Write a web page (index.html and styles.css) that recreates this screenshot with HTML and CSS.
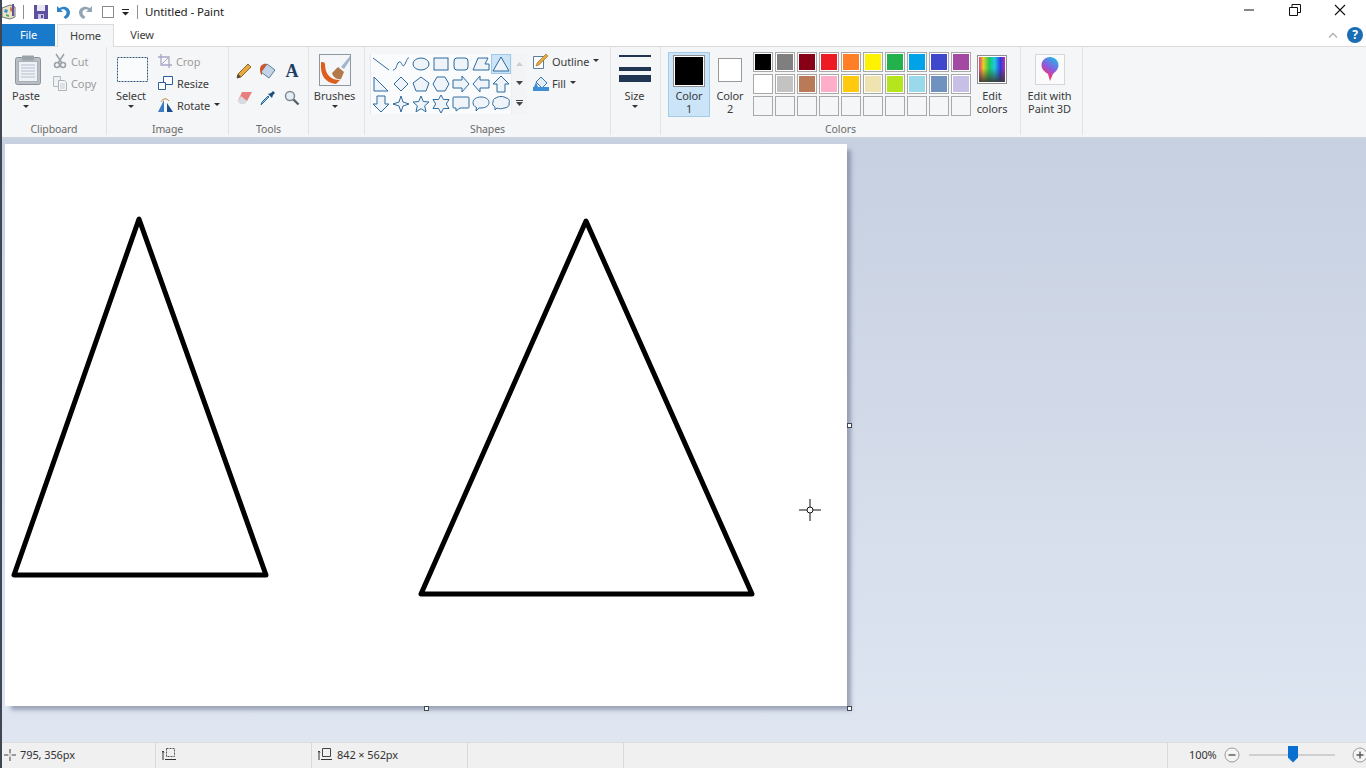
FILE: index.html
```html
<!DOCTYPE html>
<html lang="en">
<head>
<meta charset="utf-8">
<title>Untitled - Paint</title>
<link rel="stylesheet" href="styles.css">
</head>
<body>
<div class="app">
  <header class="titlebar">
    <svg class="qa app-icon" width="14" height="18" viewBox="0 0 14 18"><path d="M0 5 8 2l5 2v10l-5 2-8-2z" fill="#e9e4c8" stroke="#6a7a7c"/><path d="M3 6l3 1-1 3-3-1z" fill="#3d8fc9"/><path d="M8 4l3 1v4l-3-1z" fill="#d8803a"/><path d="M4 11l3 1v2l-3-1z" fill="#5aa35a"/><path d="M11 1v12" stroke="#6a4f9a" stroke-width="2"/></svg>
    <span class="qa-sep first"></span>
    <svg class="qa save" width="16" height="16" viewBox="0 0 16 16"><path d="M1 1h14v14H1z" fill="#5d519f"/><path d="M4 1h8v6H4z" fill="#e9e6f4"/><path d="M5 10h6v5H5z" fill="#c9c4e2"/><path d="M8 11h2v3H8z" fill="#5d519f"/></svg>
    <svg class="qa undo" width="16" height="16" viewBox="0 0 16 16"><path d="M2 2v6h6L5.700 5.800C8 4.300 11.500 5.500 11.500 8.500c0 2-1 3.300-3 4.500l2 2c3-1.500 4.500-3.500 4.500-6.500C15 3.500 9 .8 4.300 4.300z" fill="#2f83c9"/></svg>
    <svg class="qa redo" width="16" height="16" viewBox="0 0 16 16"><path d="M14 2v6H8l2.300-2.200C8 4.300 4.500 5.500 4.500 8.500c0 2 1 3.300 3 4.500l-2 2C2.500 13.500 1 11.500 1 8.500 1 3.500 7 .8 11.700 4.300z" fill="#93a5b5"/></svg>
    <span class="qa-box"></span>
    <svg class="qa qa-more" width="9" height="7" viewBox="0 0 9 7"><path d="M1 .5h7" stroke="#222"/><path d="M1 3h7L4.500 6.500z" fill="#222"/></svg>
    <span class="qa-sep"></span>
    <span class="window-title">Untitled - Paint</span>
    <div class="window-controls">
      <svg width="12" height="12" viewBox="0 0 12 12"><path d="M1 6h10" stroke="#111"/></svg>
      <svg width="12" height="12" viewBox="0 0 12 12"><path d="M.5 3.500h8v8h-8zM3 3.500v-3h8.500v8h-3" fill="none" stroke="#111"/></svg>
      <svg width="12" height="12" viewBox="0 0 12 12"><path d="M1 1l10 10M11 1 1 11" stroke="#111" stroke-width="1.100"/></svg>
    </div>
  </header>

  <nav class="tabs">
    <span class="tab file">File</span>
    <span class="tab home">Home</span>
    <span class="tab view">View</span>
    <div class="tab-right">
      <svg width="10" height="6" viewBox="0 0 10 6"><path d="M1 5.500l4-4 4 4" fill="none" stroke="#aab0b6" stroke-width="1.300"/></svg>
      <svg width="16" height="16" viewBox="0 0 16 16"><circle cx="8" cy="8" r="8" fill="#1a6db5"/><text x="8" y="12" class="help-mark">?</text></svg>
    </div>
  </nav>

  <section class="ribbon">
    <div class="group g-clipboard">
      <div class="group-body">
        <div class="big w48">
          <div class="big-icon paste-icon">
            <svg width="26" height="30" viewBox="0 0 26 30"><rect x=".5" y="2.500" width="25" height="27" rx="2" fill="#b9bec4" stroke="#8d949b"/><rect x="3.500" y="6.500" width="19" height="20" fill="#eef1f5" stroke="#aab0b8"/><rect x="7" y=".5" width="12" height="5" rx="1" fill="#9aa2aa"/><path d="M6 10h14M6 13h14M6 16h14M6 19h14M6 22h14" stroke="#b6bfd0"/></svg>
          </div>
          <span class="big-label">Paste</span>
          <span class="caret"></span>
        </div>
        <div class="small-col off">
          <div class="small"><svg class="si" width="14" height="16" viewBox="0 0 14 16"><path d="M3 1l6 9M11 1 5 10" stroke="#9aa1a8" stroke-width="1.500"/><circle cx="4" cy="12" r="2.500" fill="none" stroke="#9aa1a8" stroke-width="1.500"/><circle cx="10" cy="12" r="2.500" fill="none" stroke="#9aa1a8" stroke-width="1.500"/></svg>Cut</div>
          <div class="small"><svg class="si" width="14" height="16" viewBox="0 0 14 16"><path d="M.5 1.500h7v10h-7z" fill="#eef1f4" stroke="#b3bac1"/><path d="M5.500 5.500h6l2 2v8h-8z" fill="#f5f6f8" stroke="#a9b1b9"/><path d="M7 9h5M7 11h5M7 13h5" stroke="#c5ccd3"/></svg>Copy</div>
        </div>
      </div>
      <div class="group-label">Clipboard</div>
    </div>

    <div class="group g-image">
      <div class="group-body">
        <div class="big w48">
          <div class="big-icon select-icon">
            <svg width="31" height="25" viewBox="0 0 31 25"><rect x=".5" y=".5" width="30" height="24" fill="#fafbfc" stroke="#33567e" stroke-dasharray="2 1"/></svg>
          </div>
          <span class="big-label">Select</span>
          <span class="caret"></span>
        </div>
        <div class="small-col">
          <div class="small off"><svg class="si" width="14" height="14" viewBox="0 0 14 14"><path d="M3 0v11h11M0 3h11v11" fill="none" stroke="#a6a6c8" stroke-width="1.300"/><path d="M4 10l6-6" stroke="#a6a6c8"/></svg>Crop</div>
          <div class="small"><svg class="si" width="15" height="14" viewBox="0 0 15 14"><path d="M5.500 .5h9v8h-9z" fill="#fff" stroke="#2c5d9c"/><path d="M.5 6.500h7v7h-7z" fill="#fff" stroke="#2c5d9c"/></svg>Resize</div>
          <div class="small"><svg class="si" width="15" height="14" viewBox="0 0 15 14"><path d="M0 14 6 2v12z" fill="#3b7cc0"/><path d="M9 14V5l6 9z" fill="#1c4f8f"/><path d="M3 4c2-4 6-4 8-1" fill="none" stroke="#c9823a"/></svg>Rotate<span class="caret inline"></span></div>
        </div>
      </div>
      <div class="group-label">Image</div>
    </div>

    <div class="group g-tools">
      <div class="tool-grid">
        <svg width="16" height="16" viewBox="0 0 16 16"><path d="M1 15l1-4L12 1l3 3L5 14z" fill="#e5a93f" stroke="#8f6a2a"/><path d="M1 15l1-4 3 3z" fill="#444"/></svg>
        <svg width="18" height="17" viewBox="0 0 18 17"><path d="M8 2l8 6-6 8-8-6z" fill="#c3d4e6" stroke="#5c7da0"/><path d="M1 7c0-3 3-6 7-5L3 9v4c-1 0-2-3-2-6z" fill="#d0562c"/></svg>
        <span class="tool-a">A</span>
        <svg width="17" height="14" viewBox="0 0 17 14"><path d="M6 1h10l-5 9H2z" fill="#e77f7f"/><path d="M2 10l3-5 6 5-2 3H4z" fill="#d7dbe0"/></svg>
        <svg width="16" height="16" viewBox="0 0 16 16"><path d="M9 7 3 13l-2 2 1-3 6-6z" fill="#7fc0ea" stroke="#2b6f9f"/><path d="M8 4l4 4 1-3 2-2-2-2-2 2z" fill="#1e4f80"/></svg>
        <svg width="16" height="16" viewBox="0 0 16 16"><circle cx="6" cy="6" r="4.500" fill="#e4edf5" stroke="#7f8a95" stroke-width="1.500"/><path d="M9.500 9.500l5 5" stroke="#57606a" stroke-width="2.400"/></svg>
      </div>
      <div class="group-label">Tools</div>
    </div>

    <div class="group g-brushes">
      <div class="group-body">
        <div class="big grow">
          <div class="big-icon brush-box">
            <svg width="32" height="32" viewBox="0 0 32 32"><rect x=".5" y=".5" width="31" height="31" fill="#f4f6f9" stroke="#8f97a0"/><path d="M2 9C1 21 6 29 17 30l4-4C11 26 6 20 6 10c0-2-4-3-4-1z" fill="#dc5f1e"/><path d="M13 19l6-6 6 5-3 7c-4 1-8-2-9-6z" fill="#b27a4a"/><path d="M22 13 31 2v4l-6 9z" fill="#9fb6cc"/></svg>
          </div>
          <span class="big-label">Brushes</span>
          <span class="caret"></span>
        </div>
      </div>
      <div class="group-label blank">&nbsp;</div>
    </div>

    <div class="group g-shapes">
      <div class="group-body">
        <div class="gallery">
          <div class="shape-grid">
            <svg viewBox="0 0 20 20"><path d="M2 4l16 12"/></svg>
            <svg viewBox="0 0 20 20"><path class="nofill" d="M2 16c4 0 3-6 6-8s3 8 6 2 2-6 4-6"/></svg>
            <svg viewBox="0 0 20 20"><ellipse cx="10" cy="10" rx="8" ry="6"/></svg>
            <svg viewBox="0 0 20 20"><rect x="3" y="4" width="14" height="12"/></svg>
            <svg viewBox="0 0 20 20"><rect x="3" y="4" width="14" height="12" rx="3"/></svg>
            <svg viewBox="0 0 20 20"><path d="M2 16 7 4h10l-3 6h4v6z"/></svg>
            <svg class="picked" viewBox="0 0 20 20"><path d="M10 3l8 14H2z"/></svg>
            <svg viewBox="0 0 20 20"><path d="M3 3v14h14z"/></svg>
            <svg viewBox="0 0 20 20"><path d="M10 3l7 7-7 7-7-7z"/></svg>
            <svg viewBox="0 0 20 20"><path d="M10 3l8 6-3 8H5L2 9z"/></svg>
            <svg viewBox="0 0 20 20"><path d="M6 3h8l4 7-4 7H6l-4-7z"/></svg>
            <svg viewBox="0 0 20 20"><path d="M2 6h9V2l7 8-7 8v-4H2z"/></svg>
            <svg viewBox="0 0 20 20"><path d="M18 6H9V2l-7 8 7 8v-4h9z"/></svg>
            <svg viewBox="0 0 20 20"><path d="M10 2l8 8h-4v8H6v-8H2z"/></svg>
            <svg viewBox="0 0 20 20"><path d="M6 2h8v8h4l-8 8-8-8h4z"/></svg>
            <svg viewBox="0 0 20 20"><path d="M10 2l2 6 6 2-6 2-2 6-2-6-6-2 6-2z"/></svg>
            <svg viewBox="0 0 20 20"><path d="M10 2l2.300 5.500 5.700.500-4.300 3.800 1.300 6L10 14.700 5 17.800l1.300-6L2 8l5.700-.500z"/></svg>
            <svg viewBox="0 0 20 20"><path d="M10 1l2.500 4.500H18l-2.700 4.500 2.700 4.500h-5.500L10 19l-2.500-4.500H2L4.700 10 2 5.500h5.500z"/></svg>
            <svg viewBox="0 0 20 20"><path d="M3 3h14a1 1 0 0 1 1 1v9a1 1 0 0 1-1 1H9l-4 3v-3H3a1 1 0 0 1-1-1V4a1 1 0 0 1 1-1z"/></svg>
            <svg viewBox="0 0 20 20"><path d="M10 3c5 0 8 2.500 8 5.500S15 14 10 14H8l-3 3 .5-3.500C3 12.500 2 10.500 2 8.500 2 5.500 5 3 10 3z"/></svg>
            <svg viewBox="0 0 20 20"><path d="M5 4c2-2 8-2 10 0 3 0 4 3 3 5 1 3-2 5-5 5-2 1-5 1-7 0l-2 2v-3c-2-1-3-3-2-5 0-2 1-4 3-4z"/></svg>
          </div>
          <div class="gallery-scroll">
            <svg width="7" height="4" viewBox="0 0 7 4"><path d="M3.500 0 7 4H0z" fill="#c9ced3"/></svg>
            <svg width="7" height="4" viewBox="0 0 7 4"><path d="M3.500 4 7 0H0z" fill="#444"/></svg>
            <svg width="7" height="6" viewBox="0 0 7 6"><path d="M0 .5h7" stroke="#444"/><path d="M3.500 6 7 2H0z" fill="#444"/></svg>
          </div>
        </div>
        <div class="small-col outline-col">
          <div class="small"><svg class="si" width="16" height="16" viewBox="0 0 16 16"><path d="M.5 3.500h10v12H.5z" fill="#fff" stroke="#5f7d9c"/><path d="M3 13l1-3 9-9 2 2-9 9z" fill="#e5a93f" stroke="#8f6a2a" stroke-width=".6"/></svg>Outline<span class="caret inline"></span></div>
          <div class="small"><svg class="si" width="16" height="16" viewBox="0 0 16 16"><path d="M8 2l6 6-5 5-6-6z" fill="#e4edf5" stroke="#3d73a8"/><path d="M0 12h16v4H0z" fill="#3f8fd6"/><path d="M3 7 1 12h4z" fill="#3f8fd6"/></svg>Fill<span class="caret inline"></span></div>
        </div>
      </div>
      <div class="group-label">Shapes</div>
    </div>

    <div class="group g-size">
      <div class="group-body">
        <div class="big grow">
          <div class="big-icon size-lines"><span class="l1"></span><span class="l2"></span><span class="l3"></span></div>
          <span class="big-label">Size</span>
          <span class="caret"></span>
        </div>
      </div>
      <div class="group-label blank">&nbsp;</div>
    </div>

    <div class="group g-colors">
      <div class="group-body">
        <div class="color-btn active">
          <span class="swatch-big black"></span>
          <span class="big-label">Color<br>1</span>
        </div>
        <div class="color-btn second">
          <span class="swatch-mid"></span>
          <span class="big-label">Color<br>2</span>
        </div>
        <div class="palette">
          <span class="chip c1"></span><span class="chip c2"></span><span class="chip c3"></span><span class="chip c4"></span><span class="chip c5"></span><span class="chip c6"></span><span class="chip c7"></span><span class="chip c8"></span><span class="chip c9"></span><span class="chip c10"></span>
          <span class="chip c11"></span><span class="chip c12"></span><span class="chip c13"></span><span class="chip c14"></span><span class="chip c15"></span><span class="chip c16"></span><span class="chip c17"></span><span class="chip c18"></span><span class="chip c19"></span><span class="chip c20"></span>
          <span class="chip empty"></span><span class="chip empty"></span><span class="chip empty"></span><span class="chip empty"></span><span class="chip empty"></span><span class="chip empty"></span><span class="chip empty"></span><span class="chip empty"></span><span class="chip empty"></span><span class="chip empty"></span>
        </div>
        <div class="big edit-colors">
          <div class="big-icon"><span class="rainbow"></span></div>
          <span class="big-label">Edit<br>colors</span>
        </div>
      </div>
      <div class="group-label">Colors</div>
    </div>

    <div class="group g-3d">
      <div class="group-body">
        <div class="big grow">
          <div class="big-icon">
            <svg width="30" height="31" viewBox="0 0 30 31"><rect x=".5" y=".5" width="29" height="30" fill="#fbfbfc" stroke="#d4d6d9"/><defs><linearGradient id="p3d" x1="0.7" y1="0" x2="0.2" y2="1"><stop offset="0" stop-color="#27b4e6"/><stop offset=".45" stop-color="#8a5be0"/><stop offset=".75" stop-color="#e8397f"/><stop offset="1" stop-color="#ef5a3a"/></linearGradient></defs><path d="M15 3c5 0 8.500 3.700 8.500 8.300 0 4.200-3.300 6.700-5.500 8.700L15 27l-2-7c-3-1.700-6.500-4.300-6.500-8.700C6.500 6.700 10 3 15 3z" fill="url(#p3d)"/></svg>
          </div>
          <span class="big-label">Edit with<br>Paint 3D</span>
        </div>
      </div>
      <div class="group-label blank">&nbsp;</div>
    </div>
  </section>

  <main class="workspace">
    <div class="canvas">
      <svg class="drawing" width="842" height="562" viewBox="0 0 842 562">
        <path d="M134 75 9 431h252z" />
        <path d="M581 77 416 450h331z" />
      </svg>
      <span class="handle h-right"></span>
      <span class="handle h-bottom"></span>
      <span class="handle h-corner"></span>
      <svg class="crosshair" width="22" height="22" viewBox="0 0 22 22"><path d="M11 0v8M11 14v8M0 11h8M14 11h8" stroke="#111"/><circle cx="11" cy="11" r="3" fill="#fff" stroke="#111"/></svg>
    </div>
  </main>

  <footer class="statusbar">
    <div class="st st-pos"><svg width="12" height="12" viewBox="0 0 12 12"><path d="M6 0v12M0 6h12" stroke="#444"/><path d="M6 4v4M4 6h4" stroke="#fff"/></svg>795, 356px</div>
    <div class="st st-sel"><svg width="14" height="13" viewBox="0 0 14 13"><path d="M1 3v9M0 4.500 1 3l1 1.500M3 11.500h11" stroke="#333" fill="none"/><path d="M4.500 .5h8v8h-8z" fill="none" stroke="#555" stroke-dasharray="2 1"/></svg></div>
    <div class="st st-size"><svg width="14" height="13" viewBox="0 0 14 13"><path d="M1 3v9M0 4.500 1 3l1 1.500M3 11.500h11" stroke="#333" fill="none"/><path d="M4.500 .5h8v8h-8z" fill="none" stroke="#444"/></svg>842 × 562px</div>
    <div class="st st-blank"></div>
    <div class="st st-fill"></div>
    <div class="st-zoom">
      <span class="zoom-text">100%</span>
      <svg width="16" height="16" viewBox="0 0 16 16"><circle cx="8" cy="8" r="7" fill="#f4f4f4" stroke="#9b9b9b"/><path d="M4.500 8h7" stroke="#555" stroke-width="1.400"/></svg>
      <div class="slider"><span class="thumb"></span></div>
      <svg width="16" height="16" viewBox="0 0 16 16"><circle cx="8" cy="8" r="7" fill="#f4f4f4" stroke="#9b9b9b"/><path d="M4.500 8h7M8 4.500v7" stroke="#555" stroke-width="1.400"/></svg>
    </div>
  </footer>
</div>
</body>
</html>
```
FILE: styles.css
```css
* { box-sizing: border-box; }
html, body { margin: 0; padding: 0; }
body { font-family: "Noto Sans", "Open Sans", sans-serif; font-size: 11px; letter-spacing: -.1px; color: #3b3b3b; overflow: hidden; }
.app { width: 1366px; height: 768px; display: flex; flex-direction: column; background: #fff; border-left: 2px solid #3f4654; }

.titlebar { height: 24px; flex: none; display: flex; align-items: center; background: #fff; position: relative; }
.qa { flex: none; display: block; }
.app-icon { margin-left: 0; }
.qa-sep { width: 1px; height: 14px; background: #8f8f8f; flex: none; margin-left: 7px; }
.qa-sep.first + .save { margin-left: 9px; }
.undo { margin-left: 6px; }
.redo { margin-left: 7px; }
.qa-box { width: 12px; height: 12px; border: 1px solid #8a8a8a; background: #fff; margin-left: 8px; flex: none; }
.qa-more { margin-left: 7px; }
.window-title { margin-left: 7px; margin-bottom: 2px; font-size: 11.5px; color: #222; }
.window-controls { margin-left: auto; display: flex; align-items: center; gap: 33.500px; padding-right: 20px; margin-top: -4px; }

.tabs { height: 23px; flex: none; display: flex; align-items: stretch; background: #fff; border-bottom: 1px solid #dadbdc; }
.tab { display: flex; align-items: center; justify-content: center; padding-bottom: 2px; font-size: 11px; }
.file { width: 53px; margin-right: 1px; background: #1979ca; color: #fff; }
.home { width: 57px; margin-left: 1px; background: #f5f6f7; border: 1px solid #dadbdc; border-bottom: 0; height: 23px; color: #3b3b3b; }
.view { width: 56px; color: #3b3b3b; }
.tab-right { margin-left: auto; display: flex; align-items: center; gap: 9px; padding-right: 3px; }
.help-mark { font-size: 12px; font-weight: 700; fill: #fff; text-anchor: middle; }

.ribbon { height: 92px; flex: none; display: flex; background: #f5f6f7; border-bottom: 2px solid #c9d4e0; }
.group { display: flex; flex-direction: column; height: 88px; border-right: 1px solid #e2e3e5; padding-top: 3px; flex: none; }
.group-body { display: flex; height: 73px; flex: none; }
.group-label { text-align: center; line-height: 10px; font-size: 10.500px; color: #6a6a6a; margin-top: 1px; }
.g-clipboard { width: 105px; }
.g-image { width: 122px; }
.g-tools { width: 80px; }
.g-brushes { width: 56px; padding-right: 4px; }
.g-shapes { width: 246px; }
.g-shapes .group-body { padding-left: 5px; }
.g-size { width: 50px; padding-right: 2px; }
.g-colors { width: 360px; }
.g-colors .group-body { padding-left: 7px; }
.g-3d { width: 62px; padding-right: 4px; }

.big { display: flex; flex-direction: column; align-items: center; flex: none; }
.w48 { width: 48px; }
.grow { width: 100%; }
.big-icon { height: 39px; display: flex; align-items: center; justify-content: center; }
.paste-icon { padding: 0 0 0 3px; }
.select-icon { padding-left: 2px; }
.big-label { line-height: 13px; text-align: center; white-space: nowrap; }
.caret { display: block; width: 0; height: 0; border: 3px solid transparent; border-top: 3px solid #333; border-bottom: 0; margin-top: 3px; }
.caret.inline { display: inline-block; margin: 0 0 1px 4px; vertical-align: middle; }

.small-col { display: flex; flex-direction: column; padding-left: 3px; }
.small { height: 22px; display: flex; align-items: center; white-space: nowrap; }
.si { margin-right: 4px; flex: none; }
.off, .off .small { color: #9d9d9d; }

.tool-grid { display: grid; grid-template-columns: repeat(3, 24px); grid-auto-rows: 27px; padding: 7px 0 0 3px; height: 73px; place-items: center; }
.tool-a { font-family: "Liberation Serif", serif; font-weight: 700; font-size: 18px; color: #1f3f66; line-height: 1; }

.gallery { display: flex; width: 157px; height: 60px; flex: none; margin-top: 4px; background: #f9fbfd; border-left: 1px solid #e4e8ec; }
.shape-grid { display: grid; grid-template-columns: repeat(7, 20px); grid-auto-rows: 20px; }
.shape-grid svg { width: 20px; height: 20px; fill: #eef4fa; stroke: #2f6a9f; stroke-width: 1; }
.shape-grid .nofill { fill: none; }
.shape-grid .picked { background: #cce4f7; outline: 1px solid #9fc7e8; outline-offset: -1px; }
.gallery-scroll { flex: 1; display: flex; flex-direction: column; align-items: center; justify-content: space-around; background: #f3f4f5; border-left: 1px solid #eceef0; }
.outline-col { padding-left: 6px; }
.outline-col .si { margin-right: 3px; }

.size-lines { width: 32px; flex-direction: column; align-items: stretch; justify-content: flex-start; padding-top: 5px; }
.size-lines span { display: block; background: #1f3552; }
.l1 { height: 2px; }
.l2 { height: 4px; margin-top: 10px; }
.l3 { height: 7px; margin-top: 4px; }

.color-btn { display: flex; flex-direction: column; align-items: center; flex: none; height: 65px; margin-top: 2px; }
.color-btn.active { width: 42px; background: #cce4f7; border: 1px solid #a6cbe9; }
.color-btn.second { width: 40px; margin-right: 3px; }
.swatch-big { width: 32px; height: 32px; border: 1px solid #8f8f8f; outline: 1px solid #fff; outline-offset: -2px; background: #000; margin-top: 2px; margin-bottom: 2px; flex: none; }
.swatch-mid { width: 24px; height: 24px; background: #fff; border: 1px solid #9a9a9a; margin-top: 6px; margin-bottom: 7px; flex: none; }
.palette { display: grid; grid-template-columns: repeat(10, 20px); grid-auto-rows: 20px; gap: 2px; width: 218px; flex: none; margin-top: 2px; }
.chip { display: block; border: 1px solid #a9a9a9; outline: 1px solid #fff; outline-offset: -2px; }
.empty { background: #f5f6f7; outline: 0; }
.c1 { background: #000; } .c2 { background: #7f7f7f; } .c3 { background: #880015; } .c4 { background: #ed1c24; } .c5 { background: #ff7f27; }
.c6 { background: #fff200; } .c7 { background: #22b14c; } .c8 { background: #00a2e8; } .c9 { background: #3f48cc; } .c10 { background: #a349a4; }
.c11 { background: #fff; } .c12 { background: #c3c3c3; } .c13 { background: #b97a57; } .c14 { background: #ffaec9; } .c15 { background: #ffc90e; }
.c16 { background: #efe4b0; } .c17 { background: #b5e61d; } .c18 { background: #99d9ea; } .c19 { background: #7092be; } .c20 { background: #c8bfe7; }
.edit-colors { width: 42px; }
.rainbow { display: block; width: 30px; height: 29px; border: 1px solid #8f8f8f; outline: 1px solid #fff; outline-offset: -2px; background: linear-gradient(to bottom, transparent 45%, #3a3a3a), linear-gradient(to right, #e0219b, #e8d11f, #19c85a, #1fc7e3, #2c3ae0, #d92aa0); }

.workspace { flex: 1; min-height: 0; background: linear-gradient(to bottom, #c7d0e1, #dfe6f2); padding: 5px 0 0 3px; }
.canvas { width: 842px; height: 562px; background: #fff; position: relative; box-shadow: 5px 5px 4px -1px rgba(100, 110, 135, .55); }
.drawing { display: block; }
.drawing path { fill: none; stroke: #000; stroke-width: 5; stroke-linejoin: round; }
.handle { position: absolute; width: 5px; height: 5px; background: #fff; border: 1px solid #3f4654; }
.h-right { left: 842px; top: 279px; }
.h-bottom { left: 419px; top: 562px; }
.h-corner { left: 842px; top: 562px; }
.crosshair { position: absolute; left: 794px; top: 355px; }

.statusbar { height: 26px; flex: none; display: flex; align-items: center; background: #f0f0f0; border-top: 1px solid #dcdcdc; color: #333; }
.st { height: 100%; border-right: 1px solid #d9d9d9; display: flex; align-items: center; flex: none; gap: 5px; padding-bottom: 2px; }
.st-pos { width: 154px; padding-left: 2px; gap: 4px; }
.st-sel { width: 156px; padding-left: 6px; }
.st-size { width: 156px; padding-left: 6px; }
.st-blank { width: 156px; }
.st-fill { width: 544px; }
.st-zoom { flex: 1; display: flex; align-items: center; padding-left: 21px; padding-bottom: 2px; gap: 7px; }
.zoom-text { width: 28px; }
.slider { width: 86px; height: 2px; background: #cfcfcf; position: relative; margin: 0 10px 0 2px; }
.thumb { position: absolute; left: 39px; top: -8px; width: 10px; height: 17px; background: #0a6fd1; clip-path: polygon(0 0, 100% 0, 100% 70%, 50% 100%, 0 70%); }
```
